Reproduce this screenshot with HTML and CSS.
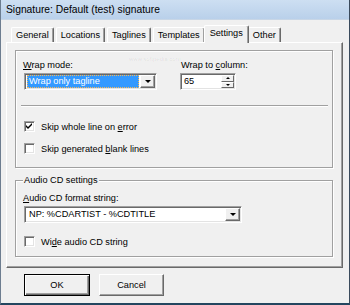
FILE: index.html
```html
<!DOCTYPE html>
<html lang="en">
<head>
    <meta charset="UTF-8">
    <title>Signature: Default (test) signature</title>
    <link rel="stylesheet" href="styles.css">
</head>
<body>
    <div class="window">
        <div class="titlebar">Signature: Default (test) signature</div>

        <div class="tabs">
            <span class="tab">General</span>
            <span class="tab">Locations</span>
            <span class="tab">Taglines</span>
            <span class="tab">Templates</span>
            <span class="tab active">Settings</span>
            <span class="tab">Other</span>
        </div>

        <div class="panel">
            <div class="group group-wrap">
                <div class="wrap-row">
                    <div class="field field-mode">
                        <div class="label"><u>W</u>rap mode:</div>
                        <div class="combo combo-mode">
                            <span class="combo-value selected">Wrap only tagline</span>
                            <span class="drop-btn"><span class="arrow"></span></span>
                        </div>
                    </div>
                    <div class="field field-col">
                        <div class="label">Wrap to <u>c</u>olumn:</div>
                        <div class="spin">
                            <span class="spin-value">65</span>
                            <span class="spin-btns">
                                <span class="spin-btn"><span class="arrow up"></span></span>
                                <span class="spin-btn"><span class="arrow"></span></span>
                            </span>
                        </div>
                    </div>
                </div>

                <div class="sep"></div>

                <div class="check">
                    <span class="box">
                        <svg width="7" height="7" viewBox="0 0 7 7"><path d="M0 2 L2 4 L6 0 L6 2 L2 6 L0 4 Z" fill="#000"/></svg>
                    </span>
                    <span>Skip whole line on <u>e</u>rror</span>
                </div>
                <div class="check check-second">
                    <span class="box"></span>
                    <span>Skip generated <u>b</u>lank lines</span>
                </div>
            </div>

            <fieldset class="group group-audio">
                <legend>Audio CD settings</legend>
                <div class="label"><u>A</u>udio CD format string:</div>
                <div class="combo combo-audio">
                    <span class="combo-value">NP: %CDARTIST - %CDTITLE</span>
                    <span class="drop-btn"><span class="arrow"></span></span>
                </div>
                <div class="check check-wide">
                    <span class="box"></span>
                    <span>Wi<u>d</u>e audio CD string</span>
                </div>
            </fieldset>
        </div>

        <div class="buttons">
            <button class="btn default">OK</button>
            <button class="btn">Cancel</button>
        </div>

        <div class="mark-url">www.softpedia.com</div>
    </div>
</body>
</html>
```

FILE: styles.css
```css
html, body {
    margin: 0;
    padding: 0;
}

body {
    font-family: "Liberation Sans", Arial, sans-serif;
    font-size: 9.2px;
    color: #000;
    background: #f0f0f0;
}

u {
    text-decoration: underline;
    text-underline-offset: 1px;
}

.window {
    position: relative;
    width: 350px;
    height: 305px;
    box-sizing: border-box;
    border-left: 1px solid #6d7d90;
    border-right: 1px solid #3a4a5c;
    border-bottom: 2px solid #24465f;
    background: #f0f0f0;
    overflow: hidden;
}

.titlebar {
    height: 19px;
    line-height: 19px;
    padding-left: 5px;
    font-size: 10.3px;
    color: #000;
    background: linear-gradient(#cddff2, #b9d0ea);
    border-bottom: 1px solid #c8d6e6;
}

/* tabs */
.tabs {
    display: flex;
    align-items: flex-end;
    height: 17px;
    margin-top: 5px;
    padding-left: 10px;
}

.tab {
    height: 14px;
    line-height: 14px;
    padding: 0 4px;
    margin-right: 2px;
    border: 1px solid;
    border-bottom: none;
    border-color: #fff #696969 #fff #fff;
    border-radius: 2px 2px 0 0;
    box-shadow: inset -1px 0 #a0a0a0;
}

.tab.active {
    position: relative;
    z-index: 1;
    height: 17px;
    line-height: 15px;
    margin: 0 0 -1px -3px;
    padding: 0 5px;
    background: #f0f0f0;
}

.tab.active + .tab {
    margin-left: -1px;
}

.panel {
    height: 226px;
    width: 337px;
    box-sizing: border-box;
    margin-left: 5px;
    padding: 7px 8px 0 8px;
    border: 1px solid;
    border-color: #fff #696969 #696969 #fff;
    box-shadow: inset -1px -1px #a0a0a0;
}

/* group boxes */
.group {
    box-sizing: border-box;
    width: 318px;
    margin: 0;
    border: 1px solid #a0a0a0;
    box-shadow: inset 1px 1px #fff, 1px 1px #fff;
}

.group-wrap {
    height: 118px;
    padding: 9px 0 0 7px;
}

.group-audio {
    height: 82px;
    margin-top: 7px;
    padding: 7px 0 0 7px;
}

.group-audio legend {
    padding: 0 1px;
    margin-left: 0;
    line-height: 11px;
    background: #f0f0f0;
}

.label {
    height: 11px;
    line-height: 11px;
}

.wrap-row {
    display: flex;
    gap: 24px;
}

.field .label {
    margin-bottom: 2px;
}

/* combo boxes */
.combo {
    display: flex;
    align-items: center;
    box-sizing: border-box;
    height: 17px;
    margin-left: 1px;
    padding: 1px 1px 1px 2px;
    border: 1px solid;
    border-color: #a0a0a0 #fff #fff #a0a0a0;
    box-shadow: inset 1px 1px #696969, inset -1px -1px #e3e3e3;
    background: #fff;
}

.combo-mode {
    width: 133px;
}

.combo-audio {
    width: 218px;
    margin-top: 2px;
}

.combo-value {
    flex: 1;
    height: 13px;
    line-height: 13px;
    padding-left: 2px;
    white-space: nowrap;
}

.combo-value.selected {
    box-sizing: border-box;
    margin-right: 1px;
    padding-left: 1px;
    line-height: 11px;
    color: #fff;
    background: #3399ff;
    border: 1px dotted #f3b85a;
}

.drop-btn {
    display: flex;
    align-items: center;
    justify-content: center;
    box-sizing: border-box;
    width: 15px;
    height: 13px;
    background: #f0f0f0;
    border: 1px solid;
    border-color: #fff #696969 #696969 #fff;
    box-shadow: inset -1px -1px #a0a0a0;
}

.arrow {
    width: 0;
    height: 0;
    border-left: 3px solid transparent;
    border-right: 3px solid transparent;
    border-top: 3px solid #000;
}

.arrow.up {
    border-top: none;
    border-bottom: 3px solid #000;
}

/* spin */
.spin {
    display: flex;
    box-sizing: border-box;
    width: 56px;
    height: 17px;
    margin-left: -1px;
    padding: 1px;
    border: 1px solid;
    border-color: #a0a0a0 #fff #fff #a0a0a0;
    box-shadow: inset 1px 1px #696969, inset -1px -1px #e3e3e3;
    background: #fff;
}

.spin-value {
    flex: 1;
    padding-left: 2px;
    line-height: 13px;
}

.spin-btns {
    display: flex;
    flex-direction: column;
    width: 13px;
}

.spin-btn {
    display: flex;
    align-items: center;
    justify-content: center;
    flex: 1;
    box-sizing: border-box;
    border: 1px solid;
    border-color: #fff #696969 #696969 #fff;
    background: #f0f0f0;
}

.spin-btn .arrow {
    border-left-width: 2px;
    border-right-width: 2px;
    border-top-width: 2px;
}

.spin-btn .arrow.up {
    border-bottom-width: 2px;
}

/* separator */
.sep {
    width: 307px;
    height: 1px;
    margin: 15px 0 0 -2px;
    background: #a0a0a0;
    box-shadow: 0 1px #fff;
}

/* checkboxes */
.check {
    display: flex;
    align-items: center;
    gap: 6px;
    height: 13px;
    margin: 14px 0 0 1px;
}

.check-second {
    margin-top: 9px;
}

.check-wide {
    margin-top: 12px;
}

.box {
    display: flex;
    align-items: center;
    justify-content: center;
    box-sizing: border-box;
    width: 11px;
    height: 11px;
    border: 1px solid;
    border-color: #a0a0a0 #fff #fff #a0a0a0;
    box-shadow: inset 1px 1px #696969, inset -1px -1px #e3e3e3;
    background: #fff;
}

/* buttons */
.buttons {
    display: flex;
    gap: 9px;
    margin: 6px 0 0 23px;
}

.btn {
    box-sizing: border-box;
    width: 65px;
    height: 22px;
    padding: 0;
    font-family: inherit;
    font-size: 9.2px;
    color: #000;
    background: #f0f0f0;
    border: 1px solid;
    border-color: #fff #696969 #696969 #fff;
    box-shadow: inset -1px -1px #a0a0a0;
}

.btn.default {
    width: 66px;
    border-color: #000;
    box-shadow: inset 1px 1px #fff, inset -1px -1px #696969, inset -2px -2px #a0a0a0;
}

/* faint watermark on the screenshot */
.mark-url {
    position: absolute;
    left: 128px;
    top: 56px;
    font-size: 6px;
    color: rgba(0, 0, 0, 0.08);
}
```
